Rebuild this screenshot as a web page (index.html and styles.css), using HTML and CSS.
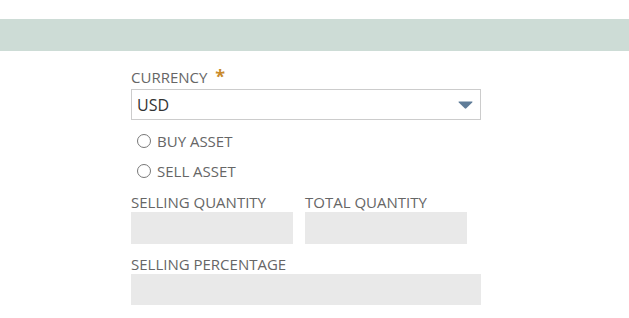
FILE: index.html
```html
<!DOCTYPE html>
<html lang="en">
<head>
  <meta charset="UTF-8">
  <meta name="viewport" content="width=device-width, initial-scale=1.0">
  <title>Asset Form</title>
  <link rel="stylesheet" href="styles.css">
</head>
<body>

  <div class="top-band"></div>

  <div class="asset-form">
    <!-- Currency -->
    <label class="field-label">CURRENCY <span class="required">*</span></label>
    <div class="select-box">
      <span>USD</span>
      <svg class="select-arrow" width="15" height="8" viewBox="0 0 15 8">
        <path d="M1 0.5 H14 Q15 0.5 14.2 1.4 L8.3 7.3 Q7.5 8 6.7 7.3 L0.8 1.4 Q0 0.5 1 0.5 Z" fill="#5f7c98"/>
      </svg>
    </div>

    <!-- Asset type -->
    <div class="radio-group">
      <div class="radio-row"><span class="radio"></span>BUY ASSET</div>
      <div class="radio-row"><span class="radio"></span>SELL ASSET</div>
    </div>

    <!-- Quantities -->
    <div class="qty-row">
      <div class="qty-col">
        <label class="field-label">SELLING QUANTITY</label>
        <div class="readonly-box"></div>
      </div>
      <div class="qty-col">
        <label class="field-label">TOTAL QUANTITY</label>
        <div class="readonly-box"></div>
      </div>
    </div>

    <label class="field-label percent-label">SELLING PERCENTAGE</label>
    <div class="readonly-box wide"></div>
  </div>

</body>
</html>
```

FILE: styles.css
```css
body {
  font-family: "Open Sans", Arial, sans-serif;
  background-color: #fff;
  margin: 0;
  padding: 0;
}

.top-band {
  margin-top: 19px;
  height: 32px;
  background-color: #cddcd6;
}

.asset-form {
  margin-left: 131px;
  width: 350px;
  padding-top: 16px;
}

.field-label {
  display: block;
  font-size: 15px;
  line-height: 20px;
  color: #666;
}

.required {
  color: #c98a2b;
  font-size: 18px;
  font-weight: bold;
  line-height: 0;
  margin-left: 4px;
}

.select-box {
  margin-top: 2px;
  height: 31px;
  box-sizing: border-box;
  border: 1px solid #ccc;
  display: flex;
  align-items: center;
  justify-content: space-between;
  padding: 0 7px 0 5px;
  font-size: 16px;
  color: #333;
}

.select-arrow {
  display: block;
  margin-top: 1px;
}

.radio-group {
  margin-top: 6px;
}

.radio-row {
  display: flex;
  align-items: center;
  height: 30px;
  padding-left: 6px;
  font-size: 15px;
  color: #666;
}

.radio {
  width: 12px;
  height: 12px;
  border: 1px solid #777;
  border-radius: 50%;
  margin-right: 6px;
}

.qty-row {
  display: flex;
  gap: 12px;
  margin-top: 6px;
}

.qty-col .readonly-box {
  width: 162px;
  height: 32px;
}

.readonly-box {
  background-color: #e9e9e9;
}

.percent-label {
  margin-top: 10px;
}

.readonly-box.wide {
  width: 350px;
  height: 31px;
}
```
